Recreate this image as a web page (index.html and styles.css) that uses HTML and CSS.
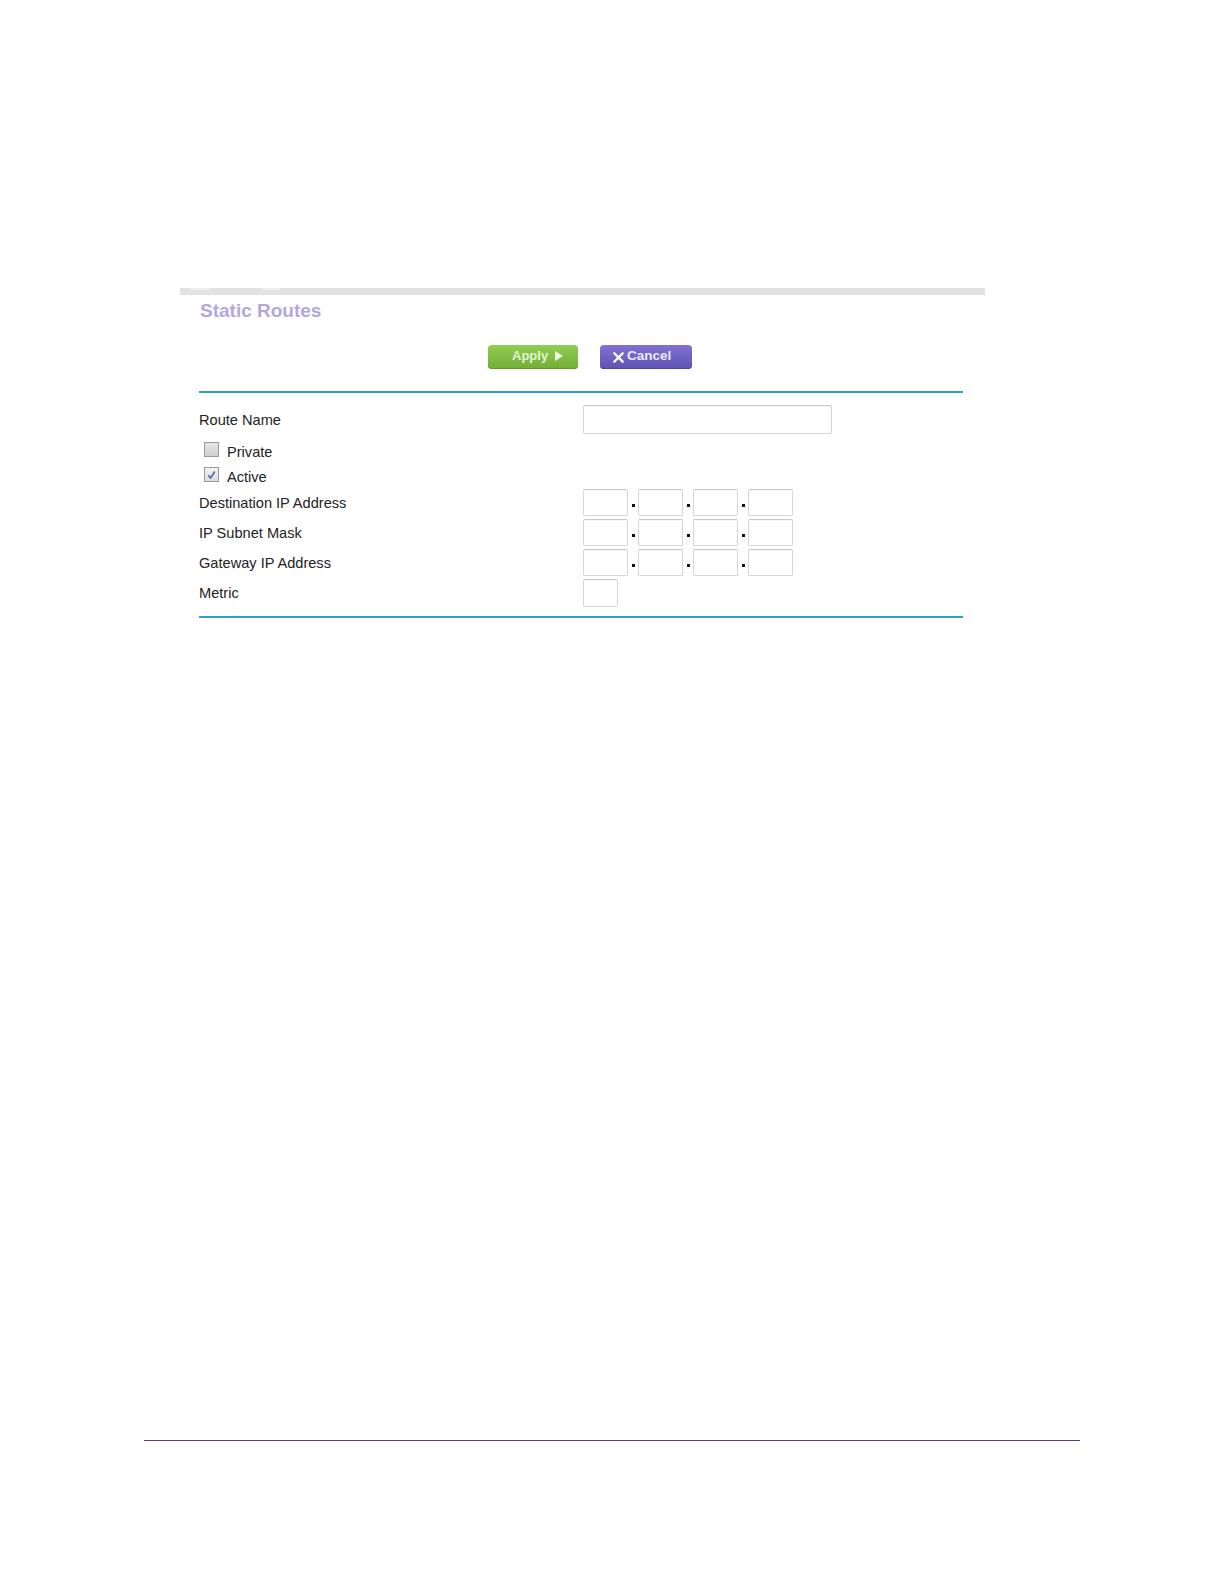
FILE: index.html
```html
<!DOCTYPE html>
<html>
<head>
<meta charset="utf-8">
<title>Static Routes</title>
<link rel="stylesheet" href="styles.css">
</head>
<body>
<div class="page">
  <div class="panel">
    <div class="topbar"><span class="tab t1"></span><span class="tab t2"></span></div>
    <div class="content">
      <h1 class="title">Static Routes</h1>
      <div class="buttons">
        <button class="btn apply">Apply <span class="tri"></span></button>
        <button class="btn cancel"><svg class="x" viewBox="0 0 12 12" width="11" height="11"><path d="M1.5 1.5 L10.5 10.5 M10.5 1.5 L1.5 10.5" stroke="#fff" stroke-width="2.4" stroke-linecap="square"/></svg>Cancel</button>
      </div>
      <div class="rule"></div>
      <div class="form">
        <div class="row r-name">
          <div class="label">Route Name</div>
          <div class="field"><div class="box wide"></div></div>
        </div>
        <div class="row r-check r-private">
          <div class="check"><span class="cb"></span><span>Private</span></div>
        </div>
        <div class="row r-check r-active">
          <div class="check"><span class="cb checked"><svg viewBox="0 0 14 14" width="14" height="14"><path d="M3.5 7.2 L6 10.2 L10.6 3.2" fill="none" stroke="#4a5fa8" stroke-width="1.6"/></svg></span><span>Active</span></div>
        </div>
        <div class="row r-ip">
          <div class="label">Destination IP Address</div>
          <div class="field ip"><div class="box oct"></div><i class="dot"></i><div class="box oct"></div><i class="dot"></i><div class="box oct"></div><i class="dot"></i><div class="box oct"></div></div>
        </div>
        <div class="row r-ip">
          <div class="label">IP Subnet Mask</div>
          <div class="field ip"><div class="box oct"></div><i class="dot"></i><div class="box oct"></div><i class="dot"></i><div class="box oct"></div><i class="dot"></i><div class="box oct"></div></div>
        </div>
        <div class="row r-ip">
          <div class="label">Gateway IP Address</div>
          <div class="field ip"><div class="box oct"></div><i class="dot"></i><div class="box oct"></div><i class="dot"></i><div class="box oct"></div><i class="dot"></i><div class="box oct"></div></div>
        </div>
        <div class="row r-metric">
          <div class="label">Metric</div>
          <div class="field"><div class="box metric"></div></div>
        </div>
      </div>
      <div class="rule bottom"></div>
    </div>
  </div>
  <div class="footer-line"></div>
</div>
</body>
</html>
```

FILE: styles.css
```css
* { box-sizing: border-box; }
html, body { margin: 0; padding: 0; background: #fff; }
body {
  font-family: "Liberation Sans", Arial, sans-serif;
  color: #222;
  width: 1224px;
  height: 1584px;
}
.page {
  padding-top: 288px;
}
.panel {
  margin-left: 180px;
  width: 805px;
}
.topbar {
  height: 7px;
  background: #e2e2e2;
  display: flex;
}
.tab { display: block; height: 2px; background: #eeeeee; }
.t1 { margin-left: 10px; width: 20px; }
.t2 { margin-left: 52px; width: 18px; }
.content {
  padding-left: 19px;
  width: 783px;
}
.title {
  margin: 5px 0 0 1px;
  font-size: 19px;
  line-height: 22px;
  font-weight: bold;
  color: #b2a8da;
}
.buttons {
  display: flex;
  gap: 22px;
  padding-left: 289px;
  margin-top: 23px;
  height: 24px;
}
.btn {
  height: 24px;
  border: none;
  border-radius: 4px;
  font-family: "Liberation Sans", Arial, sans-serif;
  font-weight: bold;
  display: flex;
  align-items: center;
  padding: 0;
  padding-bottom: 3px;
}
.apply {
  width: 90px;
  background: linear-gradient(#92cd52, #72ad36);
  color: #e4f4d2;
  font-size: 13px;
  padding-left: 24px;
  box-shadow: inset 0 -1px 0 #5f9a28;
}
.tri {
  display: inline-block;
  width: 0; height: 0;
  border-left: 8px solid #eef8e4;
  border-top: 5px solid transparent;
  border-bottom: 5px solid transparent;
  margin-left: 7px;
  margin-top: 1px;
}
.cancel {
  width: 92px;
  background: linear-gradient(#8072d0, #5f52b4);
  color: #ece9fa;
  font-size: 13.5px;
  padding-left: 13px;
  box-shadow: inset 0 -1px 0 #4e429e;
}
.cancel .x { margin-right: 3px; margin-top: 3px; }
.rule {
  height: 2px;
  background: #2aa2c6;
  width: 764px;
  margin-top: 22px;
}
.rule.bottom { margin-top: 9px; }
.form {
  padding-top: 12px;
}
.row {
  display: grid;
  grid-template-columns: 384px auto;
  align-items: center;
}
.label {
  font-size: 14.6px;
  color: #222;
}
.r-name { height: 29px; margin-bottom: 4px; }
.r-private { height: 27px; }
.r-active { height: 24px; }
.r-ip { height: 27px; margin-bottom: 3px; }
.r-metric { height: 28px; }
.check {
  display: flex;
  align-items: center;
  font-size: 14.6px;
  padding-left: 5px;
}
.r-private .check { padding-top: 1px; }
.cb {
  width: 15px;
  height: 15px;
  border: 1px solid #9a9a9a;
  background: linear-gradient(#e6e6e6, #cfcfcf);
  margin-right: 8px;
  margin-top: -5px;
  display: flex;
  align-items: center;
  justify-content: center;
}
.cb.checked { background: linear-gradient(#f4f4f4, #dcdcdc); }
.field { display: flex; align-items: center; }
.box {
  border: 1px solid #d6d6d6;
  border-top-color: #c8c8c8;
  border-radius: 2px;
  background: #fff;
  box-shadow: inset 0 1px 1px rgba(0,0,0,0.04);
}
.wide { width: 249px; height: 29px; }
.oct { width: 45px; height: 27px; }
.metric { width: 35px; height: 28px; }
.dot {
  display: block;
  width: 3px;
  height: 3px;
  background: #111;
  margin: 6px 3px 0 4px;
}
.footer-line {
  margin-top: 822px;
  margin-left: 144px;
  width: 936px;
  height: 1px;
  background: #5a3d78;
}
```
